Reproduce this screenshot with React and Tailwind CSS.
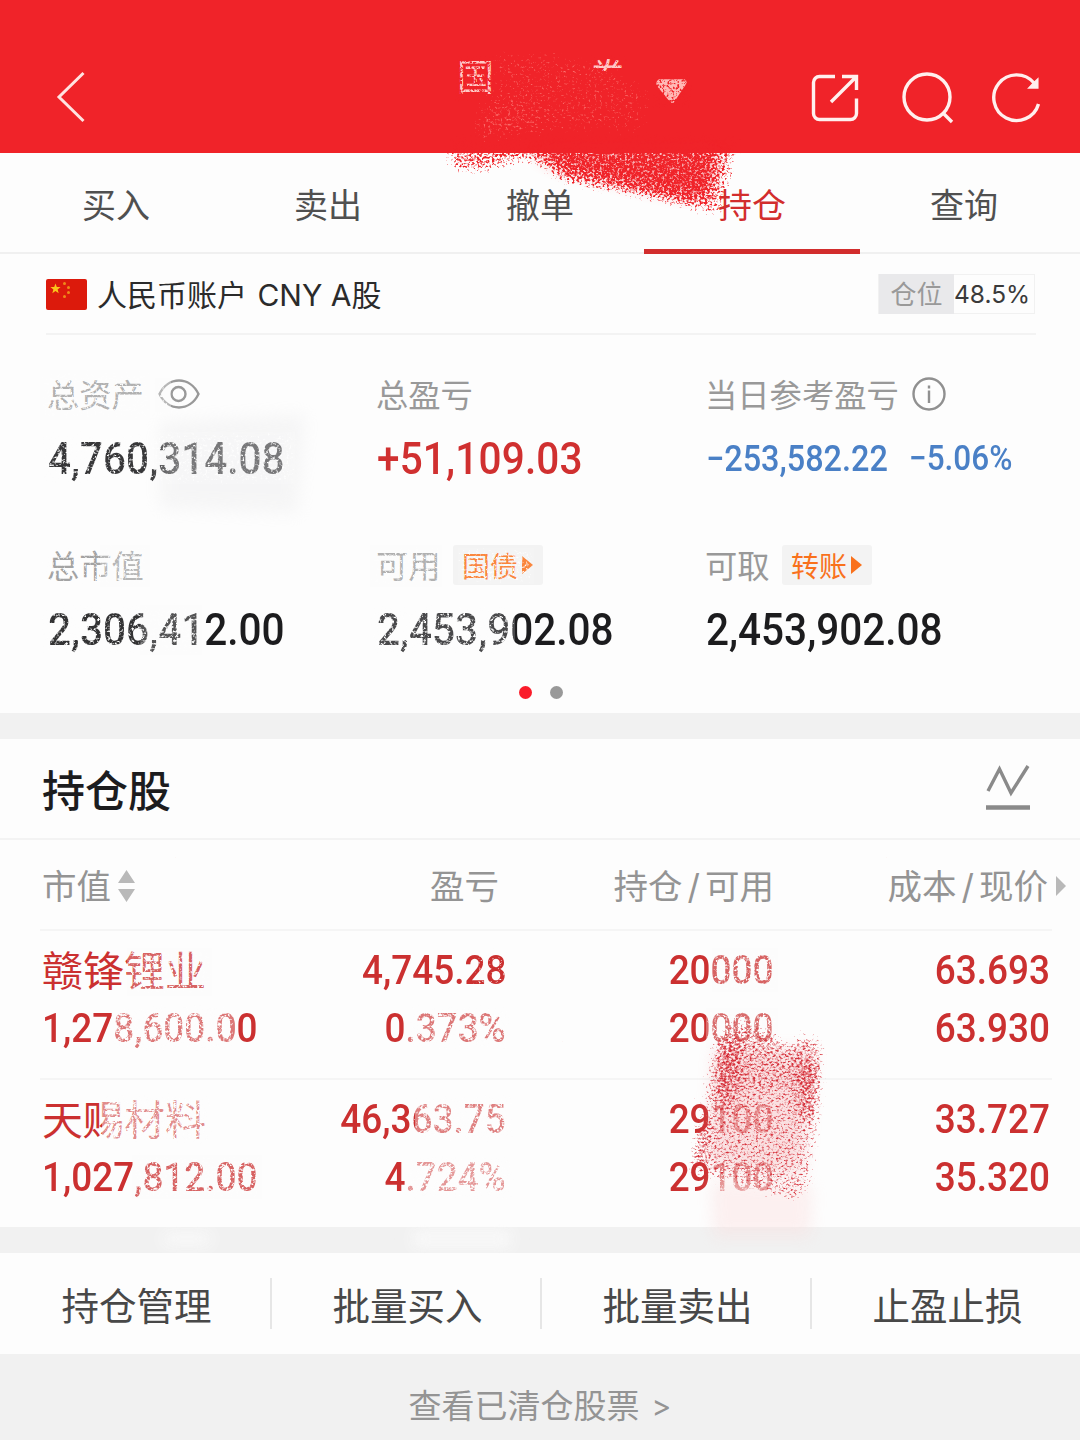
import React, { useState } from 'react';
import clsx from 'clsx';

const TABS = ['买入', '卖出', '撤单', '持仓', '查询'];

const HOLDINGS = [
  {
    name: '赣锋锂业',
    marketValue: '1,278,600.00',
    profit: '4,745.28',
    profitRate: '0.373%',
    amount: '20000',
    available: '20000',
    cost: '63.693',
    price: '63.930',
  },
  {
    name: '天赐材料',
    marketValue: '1,027,812.00',
    profit: '46,363.75',
    profitRate: '4.724%',
    amount: '29100',
    available: '29100',
    cost: '33.727',
    price: '35.320',
  },
];

const ACTIONS = ['持仓管理', '批量买入', '批量卖出', '止盈止损'];

// Areas where the text is rubbed out: grain is the speckle density, wash the even fade
const WORN_AREAS = [
  { d: 'M40 370h110v50H40z', grain: 0.44, wash: 0.25 },
  { d: 'M155 378h16v34h-16z', grain: 0.44, wash: 0.3 },
  { d: 'M40 432h255v52H40z', grain: 0.42, wash: 0.12 },
  { d: 'M40 545h60v42H40z', grain: 0.36, wash: 0.1 },
  { d: 'M100 545h50v42h-50z', grain: 0.44, wash: 0.3 },
  { d: 'M40 605h100v50H40z', grain: 0.43, wash: 0.1 },
  { d: 'M140 605h62v50h-62z', grain: 0.47, wash: 0.25 },
  { d: 'M370 545h72v42h-72z', grain: 0.44, wash: 0.25 },
  { d: 'M458 548h76v36h-76z', grain: 0.42, wash: 0.15 },
  { d: 'M370 605h145v50H370z', grain: 0.45, wash: 0.2 },
  { d: 'M127 948h85v48h-85z', grain: 0.46, wash: 0.25 },
  { d: 'M112 1005h122v46H112z', grain: 0.52, wash: 0.35 },
  { d: 'M408 1005h104v46H408z', grain: 0.48, wash: 0.35 },
  { d: 'M470 948h42v44h-42z', grain: 0.32, wash: 0 },
  { d: 'M712 948h66v44h-66z', grain: 0.48, wash: 0.25 },
  { d: 'M706 1008h72v40h-72z', grain: 0.48, wash: 0.3 },
  { d: 'M102 1095h110v48H102z', grain: 0.52, wash: 0.45 },
  { d: 'M132 1155h130v44H132z', grain: 0.48, wash: 0.25 },
  { d: 'M415 1095h98v46h-98z', grain: 0.5, wash: 0.4 },
  { d: 'M406 1155h106v44H406z', grain: 0.52, wash: 0.5 },
  { d: 'M708 1095h70v105h-70z', grain: 0.46, wash: 0.4 },
];

// ========== ICONS ==========
const BackIcon = () => (
  <svg className="h-[54px] w-[30px]" viewBox="0 0 30 54" fill="none" stroke="#ffe3e1" strokeWidth="3">
    <path d="M27.5 3 3 27l24.500 24" />
  </svg>
);

const ShareIcon = () => (
  <svg className="h-[48px] w-[48px]" viewBox="0 0 48 48" fill="none" stroke="#fff0ee" strokeWidth="3.4">
    <path d="M24 2.500H8.500a6 6 0 0 0-6 6v31a6 6 0 0 0 6 6h31a6 6 0 0 0 6-6V24.500" />
    <path d="M31 2.500h14.500V16M45 3 20 28" />
  </svg>
);

const SearchIcon = () => (
  <svg className="h-[52px] w-[52px]" viewBox="0 0 52 52" fill="none" stroke="#fff0ee" strokeWidth="3.4">
    <circle cx="25" cy="25" r="23" />
    <path d="m41 41 9 9" />
  </svg>
);

const RefreshIcon = () => (
  <svg className="h-[50px] w-[50px]" viewBox="0 0 50 50" fill="none" stroke="#fff0ee" strokeWidth="3.4">
    <path d="M46.500 31A22.800 22.800 0 1 1 42 10" />
    <path d="M45.800 6v9h-9L41 10.500z" fill="#fff0ee" strokeWidth="1.500" />
  </svg>
);

const EyeIcon = () => (
  <svg className="h-[30px] w-[42px]" viewBox="0 0 42 30" fill="none" stroke="#999" strokeWidth="2.4">
    <path d="M1.500 15C10-3 32-3 40.500 15 32 33 10 33 1.500 15Z" />
    <circle cx="20.500" cy="15" r="7" />
  </svg>
);

const InfoIcon = () => (
  <svg className="h-[34px] w-[34px]" viewBox="0 0 34 34" fill="none" stroke="#909090" strokeWidth="2.4">
    <circle cx="17" cy="17" r="15.500" />
    <path d="M17 13.500V26M17 8.500v3" />
  </svg>
);

const ChartIcon = () => (
  <svg className="h-[46px] w-[44px]" viewBox="0 0 44 46" fill="none" stroke="#8a8a8a" strokeWidth="3.4">
    <path d="m2 27 11.500-22L25 29 42 2" />
    <path d="M0 43.500h44" strokeWidth="4.400" />
  </svg>
);

const SortIcon = () => (
  <svg className="mb-[2px] h-[32px] w-[17px]" viewBox="0 0 17 32" fill="#b9b9b9">
    <path d="M8.500 0 17 13H0zM8.500 32 0 19h17z" />
  </svg>
);

const FlagIcon = () => (
  <svg className="mt-[2px] h-[31px] w-[41px]" viewBox="0 0 41 31">
    <rect width="41" height="31" rx="2" fill="#dc1a0c" />
    <path d="m9.500 4.500 1.300 3.600h3.800l-3 2.300 1.100 3.800-3.200-2.300-3.200 2.300 1.100-3.800-3-2.300h3.800z" fill="#fbc51b" />
    <g fill="#ef8a1a">
      <circle cx="18.500" cy="4.500" r="1.500" />
      <circle cx="22.500" cy="8.500" r="1.500" />
      <circle cx="22.500" cy="13.500" r="1.500" />
      <circle cx="18.500" cy="17.500" r="1.500" />
    </g>
  </svg>
);

// ========== SMALL PARTS ==========
const Num = ({ className, right, children }) => (
  <span
    className={clsx(
      'inline-block scale-x-90 whitespace-nowrap font-[Roboto,sans-serif] font-medium',
      right ? 'origin-right' : 'origin-left',
      className
    )}
  >
    {children}
  </span>
);

const LinkTag = ({ children }) => (
  <span className="ml-[12px] flex h-10 w-[90px] items-center justify-center gap-[4px] rounded-[3px] bg-[#f3f3f3] text-[28px] text-[#f9711c]">
    <span className="pt-[3px]">{children}</span>
    <svg className="h-[18px] w-[11px]" viewBox="0 0 11 18" fill="#f9711c">
      <path d="m0 0 11 9-11 9z" />
    </svg>
  </span>
);

const Stat = ({ label, extra, children }) => (
  <div>
    <div className="flex h-10 items-center text-[32.300px] leading-10 text-[#999]">
      <span className="-ml-px pt-[3px]">{label}</span>
      {extra}
    </div>
    <div className="mt-5 flex h-[50px] items-center leading-[50px]">{children}</div>
  </div>
);

const GrainFilter = ({ id, color, frequency, seed, blur, slope }) => (
  <filter id={id} filterUnits="userSpaceOnUse" x="0" y="0" width="1080" height="1440" colorInterpolationFilters="sRGB">
    <feTurbulence type="fractalNoise" baseFrequency={frequency} numOctaves="3" seed={seed} result="noise" />
    <feGaussianBlur in="SourceAlpha" stdDeviation={blur} result="soft" />
    <feComposite in="soft" in2="noise" operator="arithmetic" k2="1" k3="1" k4="-0.95" />
    <feComponentTransfer result="grain">
      <feFuncA type="linear" slope={slope} />
    </feComponentTransfer>
    <feFlood floodColor={color} />
    <feComposite in2="grain" operator="in" />
  </filter>
);

// Crayon strokes that hide part of the account details
const Doodles = () => (
  <svg className="pointer-events-none absolute inset-0 h-[1440px] w-[1080px]" viewBox="0 0 1080 1440">
    <defs>
      <GrainFilter id="crayon" color="#f02329" frequency="0.4 0.44" seed="4" blur="6" slope="4.5" />
      <GrainFilter id="crayonDark" color="#d6303a" frequency="0.34 0.5" seed="11" blur="6" slope="3.2" />
      <GrainFilter id="crayonFine" color="#f02329" frequency="0.4 0.4" seed="9" blur="1.5" slope="5" />
      <GrainFilter id="dust" color="#ff8a84" frequency="0.36 0.42" seed="21" blur="8" slope="2.8" />
      <GrainFilter id="eraser" color="#fdfdfd" frequency="0.38 0.42" seed="7" blur="3" slope="4" />
      <filter id="haze" x="-30%" y="-30%" width="160%" height="160%">
        <feGaussianBlur stdDeviation="8" />
      </filter>
    </defs>

    {/* title */}
    <path d="M494 50h98v21h34v40H494z" fill="#f02329" />
    <g filter="url(#crayonFine)">
      <path d="M455 56h41v46h-41z" opacity="0.5" />
      <path d="M588 54h40v18h-40z" opacity="0.36" />
      <path d="M652 76h40v32h-40z" opacity="0.46" />
    </g>
    <g filter="url(#dust)">
      <path d="M490 46 590 54 655 85 648 135 560 135 470 145 475 105 488 100Z" opacity="0.35" />
      <path d="M472 106h66v34h-66z" opacity="0.1" />
    </g>
    <path d="M535 153 560 166 620 180 690 196 708 190 718 153Z" fill="#f02329" opacity="0.4" filter="url(#haze)" />
    <g filter="url(#crayon)">
      <path d="M446 135 448 170 480 175 525 162 545 172 560 184 620 195 680 208 720 218 730 182 742 135Z" opacity="0.53" />
      <path d="M530 135 560 172 620 185 690 200 710 194 715 135Z" opacity="0.32" />
    </g>

    {/* grey smudge on the total */}
    <path d="M160 422 305 414 298 514 160 508Z" fill="#e9e9ea" opacity="0.36" filter="url(#haze)" />

    {/* worn text */}
    {WORN_AREAS.map(({ d, wash }) => (
      <path key={d} d={d} fill="#fdfdfd" opacity={wash} />
    ))}
    <g filter="url(#eraser)">
      {WORN_AREAS.map(({ d, grain }) => (
        <path key={d} d={d} opacity={grain} />
      ))}
    </g>
    <path d="M162 1232h50v14h-50zM412 1230h100v18H412z" fill="#fdfdfd" opacity="0.7" filter="url(#haze)" />

    {/* available amount */}
    <path d="M712 1180 812 1185 810 1236 714 1236Z" fill="#fbdcdc" opacity="0.4" filter="url(#haze)" />
    <path d="M715 1050 812 1050 802 1175 708 1165Z" fill="#f3a0a4" opacity="0.3" filter="url(#haze)" />
    <g filter="url(#crayonDark)">
      <path d="M712 1040 735 1014 778 1032 790 1048 800 1030 826 1036 824 1100 812 1190 797 1206 730 1184 686 1176 702 1090Z" opacity="0.46" />
      <path d="M722 1040h20l-8 68h-18zM800 1060h20l-6 58h-18zM698 1120h14l-8 46h-14z" opacity="0.26" />
      <path d="M715 1036h100v54H715z" opacity="0.1" />
    </g>
  </svg>
);

// ========== SECTIONS ==========
const Header = () => (
  <header className="grid h-[153px] grid-cols-[1fr_auto_1fr] items-start bg-[#f02329] pl-[56px] pr-[38px]">
    <div className="pt-[70px]">
      <BackIcon />
    </div>
    <div className="ml-[46px] flex h-[120px] w-[230px] items-start pt-[57px] text-[37px] leading-[42px] text-[#ffc9c6]">
      <span className="w-[38px]">国</span>
      <span className="ml-[95px] w-[38px]">券</span>
      <svg className="ml-[29px] mt-[22px] h-[24px] w-[32px]" viewBox="0 0 32 24" fill="#ffb9b6">
        <path d="M3 0h26q4 2 1 6L18 24h-3L1 7q-2-5 2-7z" />
      </svg>
    </div>
    <div className="flex justify-end pt-[72px]">
      <span className="mt-[2px]"><ShareIcon /></span>
      <span className="ml-[43px]"><SearchIcon /></span>
      <span className="ml-[38px] mt-[1px]"><RefreshIcon /></span>
    </div>
  </header>
);

const TabBar = ({ active, onChange }) => (
  <nav className="flex h-[101px] border-b-2 border-[#f0f0f0] px-[10px]">
    {TABS.map((tab, i) => (
      <button
        key={tab}
        onClick={() => onChange(i)}
        className={clsx(
          'relative flex-1 pt-[5px] text-[34px]',
          active === i ? 'text-[#d22d2d]' : 'text-[#505050]'
        )}
      >
        {tab}
        {active === i && <span className="absolute -inset-x-[2px] -bottom-[2px] h-[5px] bg-[#d22d2d]" />}
      </button>
    ))}
  </nav>
);

const Account = () => (
  <section className="h-[459px] pl-[46px] pr-[44px]">
    <div className="flex h-[81px] items-center border-b-2 border-[#f3f3f3]">
      <FlagIcon />
      <span className="ml-[10px] pt-[3px] text-[30px] text-[#2b2b2b]">
        人民币账户<span className="ml-[2px]"> CNY A</span>股
      </span>
      <div className="ml-auto mr-px flex h-10 w-[157px] items-center border border-[#f1f1f1] text-[26px]">
        <span className="flex h-10 w-[75px] items-center justify-center bg-[#e9e9eb] pt-[2px] text-[#999]">仓位</span>
        <span className="pt-[1px] text-[24.500px] text-[#3a3a3a]">48.5%</span>
      </div>
    </div>

    <div className="grid grid-cols-[329px_329px_1fr] gap-y-[61px] pl-[2px] pt-[39px] text-[45px] text-[#1c1c1e]">
      <Stat label="总资产" extra={<span className="ml-[14px]"><EyeIcon /></span>}>
        <Num>4,760,314.08</Num>
      </Stat>
      <Stat label="总盈亏">
        <Num className="tracking-[0.2px] text-[#d03030]">+51,109.03</Num>
      </Stat>
      <Stat label="当日参考盈亏" extra={<span className="ml-[13px]"><InfoIcon /></span>}>
        <div className="flex w-[330px] items-center text-[#4a80c6]">
          <Num className="w-[203px] text-[36px]">−253,582.22</Num>
          <Num className="text-[35px]">−5.06%</Num>
        </div>
      </Stat>
      <Stat label="总市值">
        <Num>2,306,412.00</Num>
      </Stat>
      <Stat label="可用" extra={<LinkTag>国债</LinkTag>}>
        <Num>2,453,902.08</Num>
      </Stat>
      <Stat label="可取" extra={<LinkTag>转账</LinkTag>}>
        <Num>2,453,902.08</Num>
      </Stat>
    </div>

    <div className="mt-[31px] flex justify-center gap-[18px]">
      <span className="h-[13px] w-[13px] rounded-full bg-[#fa1c2a]" />
      <span className="h-[13px] w-[13px] rounded-full bg-[#999]" />
    </div>
  </section>
);

const HoldingRow = ({ item }) => (
  <div className="grid h-[149px] grid-cols-[232px_232px_268px_1fr] content-start gap-y-[18px] border-t-2 border-[#f5f5f5] pl-[2px] pr-[2px] pt-[18px] text-[41px] leading-10 text-[#cb3030]">
    <span className="whitespace-nowrap pt-[2px]">{item.name}</span>
    <span className="text-right"><Num right>{item.profit}</Num></span>
    <span className="text-right"><Num right>{item.amount}</Num></span>
    <span className="text-right"><Num right>{item.cost}</Num></span>
    <span className="-mt-[2px]"><Num>{item.marketValue}</Num></span>
    <span className="-mt-[2px] text-right"><Num right>{item.profitRate}</Num></span>
    <span className="-mt-[2px] text-right"><Num right>{item.available}</Num></span>
    <span className="-mt-[2px] text-right"><Num right>{item.price}</Num></span>
  </div>
);

const Holdings = () => (
  <section>
    <div className="flex h-[101px] items-center justify-between border-b-2 border-[#f3f3f3] pl-[42px] pr-[50px]">
      <h2 className="pt-[5px] text-[43px] font-medium text-[#1c1c1e]">持仓股</h2>
      <span className="mb-1"><ChartIcon /></span>
    </div>
    <div className="flex h-[89px] items-center pl-[42px] pr-[14px] pt-[5px] text-[34.500px] text-[#949494]">
      <span className="flex w-[200px] items-center gap-[7px]">市值<SortIcon /></span>
      <span className="w-[257px] text-right">盈亏</span>
      <span className="w-[275px] text-right">持仓<span className="px-[5px]">/</span>可用</span>
      <span className="flex flex-1 items-center justify-end gap-[8px]">
        <span>成本<span className="px-[5px]">/</span>现价</span>
        <svg className="mb-[2px] h-[20px] w-[10px]" viewBox="0 0 10 20" fill="#b9b9b9">
          <path d="m0 0 10 10L0 20z" />
        </svg>
      </span>
    </div>
    <div className="h-[298px] pl-[40px] pr-[28px]">
      {HOLDINGS.map((item) => (
        <HoldingRow key={item.name} item={item} />
      ))}
    </div>
  </section>
);

// ========== MAIN ==========
const App = () => {
  const [activeTab, setActiveTab] = useState(3);

  return (
    <div className="relative h-[1440px] w-[1080px] overflow-hidden bg-[#fdfdfd] font-[Inter,'Noto_Sans_CJK_SC',sans-serif]">
      <Header />
      <TabBar active={activeTab} onChange={setActiveTab} />
      <Account />
      <div className="h-[26px] bg-[#f1f1f1]" />
      <Holdings />
      <div className="h-[26px] bg-[#f1f1f1]" />
      <div className="grid h-[101px] grid-cols-[272px_270px_270px_268px] items-center">
        {ACTIONS.map((label, i) => (
          <button
            key={label}
            className={clsx(
              'h-[51px] pl-[3px] pt-[3px] text-[37.500px] leading-[51px] text-[#484848]',
              i < 3 && 'border-r-2 border-[#e6e6e6]'
            )}
          >
            {label}
          </button>
        ))}
      </div>
      <footer className="flex h-[87px] items-center justify-center gap-[12px] bg-[#f1f1f1] pt-[18px] text-[33px] text-[#949494]">
        <span>查看已清仓股票</span>
        <span className="text-[30px]">&gt;</span>
      </footer>
      <Doodles />
    </div>
  );
};

export default App;
